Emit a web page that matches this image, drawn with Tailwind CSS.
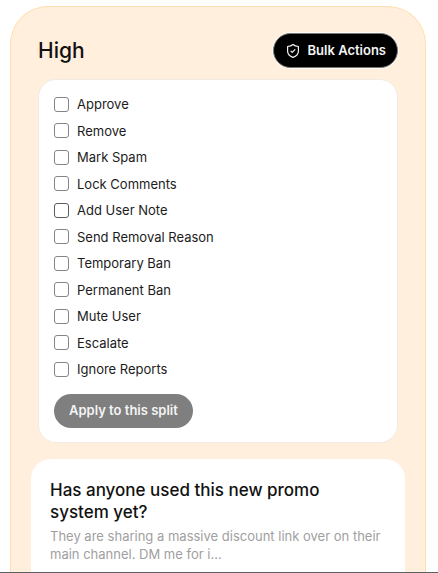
<!DOCTYPE html>
<html lang="en">
<head>
<meta charset="utf-8">
<meta name="viewport" content="width=device-width, initial-scale=1">
<title>Moderation queue</title>
<script src="https://cdn.jsdelivr.net/npm/@tailwindcss/browser@4"></script>
</head>
<body class="flex min-h-screen flex-col border-b border-[#5f5f5f] bg-white font-['Inter',sans-serif] text-[#1c1c1c]">
<main class="mt-[6px] mr-3 ml-[10px] flex flex-1 flex-col rounded-t-[38px] border border-b-0 border-[#ffdeae] bg-[#ffefdc] px-5 pt-[26px]">
  <header class="flex items-center justify-between px-[7px]">
    <h1 class="text-[21px] leading-7 font-medium text-[#111]">High</h1>
    <button type="button" class="flex h-[35px] items-center gap-[7px] rounded-full border border-[#777] bg-black px-[11px] text-[13px] font-semibold text-[#f4f4f4] ring-1 ring-white/70">
      <svg class="size-4" viewBox="0 0 16 16" fill="none" stroke="currentColor" stroke-width="1.2" stroke-linecap="round" stroke-linejoin="round" aria-hidden="true"><path d="M8 1.500C6.600 2.700 4.900 3.300 2.600 3.500V8.300C2.600 11.500 4.700 13.200 8 14.400C11.300 13.200 13.400 11.500 13.400 8.300V3.500C11.100 3.300 9.400 2.700 8 1.500Z"/><path d="M6 8.200 7.300 9.400 9.900 6.700"/></svg>
      Bulk Actions
    </button>
  </header>
  <form class="mx-[7px] mt-[11px] rounded-[18px] border border-[#f1ebe6] bg-white px-[15px] py-[14px]">
    <div class="grid h-[285px] content-between text-[13px] leading-5">
      <label class="flex items-center gap-2"><input type="checkbox" class="size-[15px] appearance-none rounded-[3px] border border-[#858585] bg-white">Approve</label>
      <label class="flex items-center gap-2"><input type="checkbox" class="size-[15px] appearance-none rounded-[3px] border border-[#858585] bg-white">Remove</label>
      <label class="flex items-center gap-2"><input type="checkbox" class="size-[15px] appearance-none rounded-[3px] border border-[#858585] bg-white">Mark Spam</label>
      <label class="flex items-center gap-2"><input type="checkbox" class="size-[15px] appearance-none rounded-[3px] border border-[#858585] bg-white">Lock Comments</label>
      <label class="flex items-center gap-2"><input type="checkbox" class="size-[15px] appearance-none rounded-[3px] border border-[#5c5c5c] bg-white">Add User Note</label>
      <label class="flex items-center gap-2"><input type="checkbox" class="size-[15px] appearance-none rounded-[3px] border border-[#858585] bg-white">Send Removal Reason</label>
      <label class="flex items-center gap-2"><input type="checkbox" class="size-[15px] appearance-none rounded-[3px] border border-[#858585] bg-white">Temporary Ban</label>
      <label class="flex items-center gap-2"><input type="checkbox" class="size-[15px] appearance-none rounded-[3px] border border-[#858585] bg-white">Permanent Ban</label>
      <label class="flex items-center gap-2"><input type="checkbox" class="size-[15px] appearance-none rounded-[3px] border border-[#858585] bg-white">Mute User</label>
      <label class="flex items-center gap-2"><input type="checkbox" class="size-[15px] appearance-none rounded-[3px] border border-[#858585] bg-white">Escalate</label>
      <label class="flex items-center gap-2"><input type="checkbox" class="size-[15px] appearance-none rounded-[3px] border border-[#858585] bg-white">Ignore Reports</label>
    </div>
    <button type="button" disabled class="mt-[15px] block h-[34px] rounded-full bg-[#7f7f7f] px-[15px] text-[13px] font-semibold text-[#f4f4f4]">Apply to this split</button>
  </form>
  <article class="mt-4 flex-1 rounded-t-[20px] bg-white px-[19px] pt-5">
    <h2 class="pr-5 text-[17px] leading-[22px] font-medium text-[#111]">Has anyone used this new promo system yet?</h2>
    <p class="mt-1 text-[13px] leading-[18px] text-[#a0a0a0]">They are sharing a massive discount link over on their main channel. DM me for i...</p>
  </article>
</main>
</body>
</html>
